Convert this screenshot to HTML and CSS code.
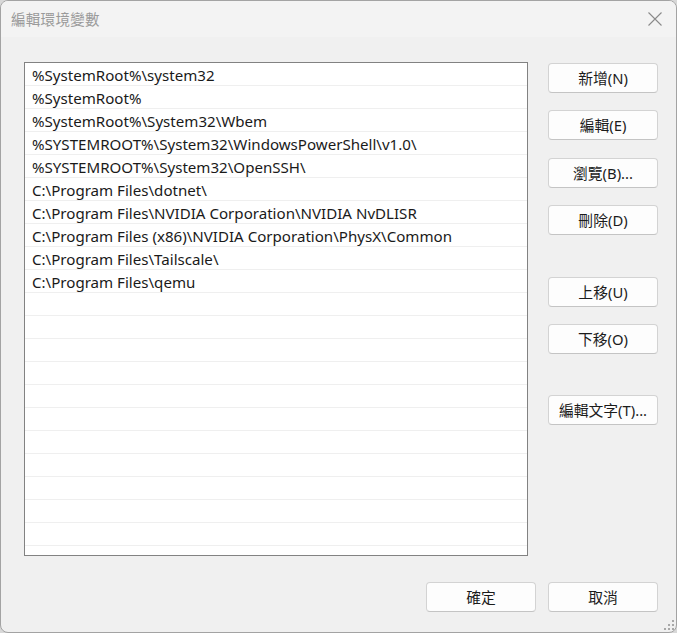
FILE: index.html
```html
<!DOCTYPE html>
<html lang="zh-Hant">
<head>
<meta charset="utf-8">
<title>編輯環境變數</title>
<link rel="stylesheet" href="styles.css">
</head>
<body>
<div class="window">
  <div class="titlebar">
    <span class="title">編輯環境變數</span>
    <span class="close">
      <svg width="14" height="14" viewBox="0 0 14 14"><path d="M0.5 0.5 L13.5 13.5 M13.5 0.5 L0.5 13.5" stroke="#8a8a8a" stroke-width="1.1" fill="none"/></svg>
    </span>
  </div>
  <div class="content">
    <div class="main">
      <div class="list">
        <div class="row">%SystemRoot%\system32</div>
        <div class="row">%SystemRoot%</div>
        <div class="row">%SystemRoot%\System32\Wbem</div>
        <div class="row">%SYSTEMROOT%\System32\WindowsPowerShell\v1.0\</div>
        <div class="row">%SYSTEMROOT%\System32\OpenSSH\</div>
        <div class="row">C:\Program Files\dotnet\</div>
        <div class="row">C:\Program Files\NVIDIA Corporation\NVIDIA NvDLISR</div>
        <div class="row">C:\Program Files (x86)\NVIDIA Corporation\PhysX\Common</div>
        <div class="row">C:\Program Files\Tailscale\</div>
        <div class="row">C:\Program Files\qemu</div>
        <div class="row"></div>
        <div class="row"></div>
        <div class="row"></div>
        <div class="row"></div>
        <div class="row"></div>
        <div class="row"></div>
        <div class="row"></div>
        <div class="row"></div>
        <div class="row"></div>
        <div class="row"></div>
        <div class="row"></div>
        <div class="row"></div>
      </div>
      <div class="side">
        <button class="btn b-first">新增(N)</button>
        <button class="btn b-gap17">編輯(E)</button>
        <button class="btn b-gap18">瀏覽(B)...</button>
        <button class="btn b-gap17">刪除(D)</button>
        <button class="btn b-gap42">上移(U)</button>
        <button class="btn b-gap17">下移(O)</button>
        <button class="btn b-gap41">編輯文字(T)...</button>
      </div>
    </div>
    <div class="footer">
      <button class="btn">確定</button>
      <button class="btn">取消</button>
    </div>
  </div>
  <div class="grip">
    <svg width="10" height="10" viewBox="0 0 10 10" fill="#a8a8a8">
      <rect x="8" y="0" width="2" height="2"/>
      <rect x="4" y="4" width="2" height="2"/>
      <rect x="8" y="4" width="2" height="2"/>
      <rect x="0" y="8" width="2" height="2"/>
      <rect x="4" y="8" width="2" height="2"/>
      <rect x="8" y="8" width="2" height="2"/>
    </svg>
  </div>
</div>
</body>
</html>
```
FILE: styles.css
```css
* { box-sizing: border-box; }
html, body {
  margin: 0;
  padding: 0;
  background: #d8d8d8;
}
body {
  width: 677px;
  height: 633px;
  overflow: hidden;
  font-family: "Noto Sans", "Noto Sans CJK TC", sans-serif;
}
.window {
  position: relative;
  width: 677px;
  height: 633px;
  border: 1px solid #a3a3a3;
  border-radius: 8px;
  background: #f0f0f0;
  overflow: hidden;
  display: flex;
  flex-direction: column;
}
.titlebar {
  height: 36px;
  background: #f3f3f3;
  display: flex;
  align-items: center;
  justify-content: space-between;
  padding: 0 14px 0 10px;
  flex-shrink: 0;
}
.title {
  font-family: "Noto Sans CJK TC", sans-serif;
  font-size: 14.5px;
  color: #9a9a9a;
  letter-spacing: 0.3px;
  margin-top: -1px;
}
.close {
  display: flex;
  margin-top: -1px;
}
.content {
  flex: 1;
  display: flex;
  flex-direction: column;
  padding: 25px 18px 0 23px;
}
.main {
  display: flex;
  gap: 20px;
}
.list {
  width: 504px;
  height: 494px;
  background: #ffffff;
  border: 1px solid #828282;
  overflow: hidden;
}
.row {
  height: 23px;
  border-bottom: 1px solid #efefef;
  padding-left: 7px;
  font-family: "Noto Sans", sans-serif;
  font-size: 15.1px;
  line-height: 25px;
  color: #1a1a1a;
  white-space: nowrap;
}
.side {
  display: flex;
  flex-direction: column;
  width: 110px;
}
.btn {
  width: 110px;
  height: 30px;
  background: #fdfdfd;
  border: 1px solid #d3d3d3;
  border-bottom-color: #c4c4c4;
  border-radius: 4px;
  font-family: "Noto Sans", "Noto Sans CJK TC", sans-serif;
  font-size: 14.8px;
  color: #1b1b1b;
  padding: 0;
  line-height: 29px;
}
.b-first { margin-top: 1px; }
.b-gap17 { margin-top: 17px; }
.b-gap18 { margin-top: 18px; }
.b-gap42 { margin-top: 42px; }
.b-gap41 { margin-top: 41px; }
.footer {
  display: flex;
  justify-content: flex-end;
  gap: 12px;
  margin-top: 26px;
}
.grip {
  position: absolute;
  right: 2px;
  bottom: 2px;
  display: flex;
}
```
